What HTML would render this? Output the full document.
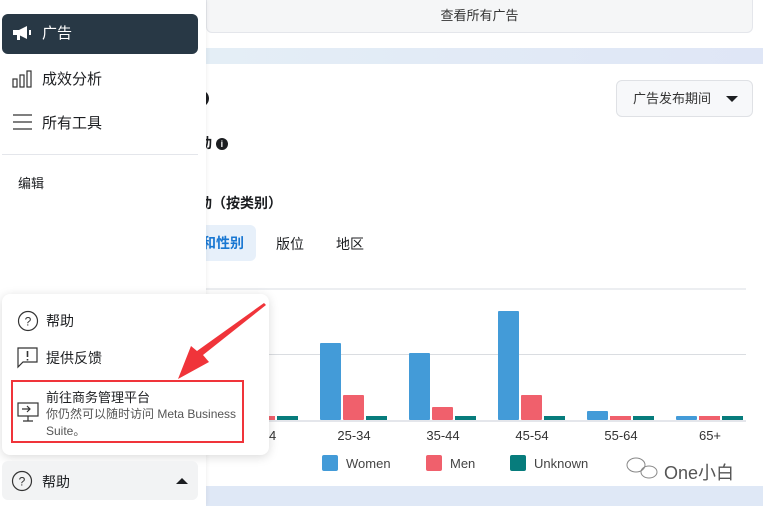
<!DOCTYPE html>
<html><head><meta charset="utf-8"><style>
*{margin:0;padding:0;box-sizing:border-box}
body{width:763px;height:506px;overflow:hidden;position:relative;background:#fff;font-family:"Liberation Sans","Noto Sans CJK SC",sans-serif;color:#1c1e21}
.a{position:absolute}
.t{font-size:14px;color:#1c1e21}
</style></head><body>
<div class="a" style="left:206px;top:0;width:557px;height:506px;background:#fff"></div>
<div class="a" style="left:206px;top:48px;width:557px;height:16px;background:linear-gradient(90deg,#e4eef6,#dfe6f6)"></div>
<div class="a" style="left:206px;top:486px;width:557px;height:20px;background:#dfe8f6"></div>
<div class="a" style="left:206px;top:-2px;width:547px;height:35px;background:#f5f6f7;border:1px solid #e4e6eb;border-radius:0 0 6px 6px;text-align:center;line-height:33px;font-size:13px;color:#333">查看所有广告</div>
<div class="a" style="left:192px;top:90px;width:17px;height:17px;border-radius:50%;background:#1c1e21"></div>
<div class="a" style="left:616px;top:80px;width:137px;height:37px;border:1px solid #dfe1e5;border-radius:6px;background:#f7f8fa;font-size:13px;line-height:35px;padding-left:16px;color:#333">广告发布期间<span style="position:absolute;right:14px;top:15px;border-left:6px solid transparent;border-right:6px solid transparent;border-top:6px solid #1c1e21"></span></div>
<div class="a t" style="left:198px;top:133px;font-weight:bold">动 <span style="display:inline-block;width:12px;height:12px;border-radius:50%;background:#1c1e21;color:#fff;font-size:9px;line-height:12px;text-align:center;vertical-align:1px">i</span></div>
<div class="a t" style="left:198px;top:193px;font-weight:bold">动（按类别）</div>
<div class="a" style="left:200px;top:225px;width:56px;height:36px;background:#e7f0fa;border-radius:0 6px 6px 0;color:#1877d2;font-weight:bold;font-size:14px;line-height:36px;padding-left:2px">和性别</div>
<div class="a t" style="left:276px;top:234px">版位</div>
<div class="a t" style="left:336px;top:234px">地区</div>
<div class="a" style="left:206px;top:288px;width:540px;height:2px;background:#eceef1"></div>
<div class="a" style="left:206px;top:354px;width:540px;height:1px;background:#dadde1"></div>
<div class="a" style="left:206px;top:420px;width:540px;height:2px;background:#e4e6eb"></div>
<svg class="a" style="left:0;top:0" width="763" height="506">
<g fill="#439bd8">
<rect x="320" y="343" width="21" height="77" rx="1"/><rect x="409" y="353" width="21" height="67" rx="1"/><rect x="498" y="311" width="21" height="109" rx="1"/><rect x="587" y="411" width="21" height="9" rx="1"/><rect x="676" y="416" width="21" height="4" rx="1"/>
</g>
<g fill="#f0606c">
<rect x="254" y="416" width="21" height="4"/><rect x="343" y="395" width="21" height="25" rx="1"/><rect x="432" y="407" width="21" height="13" rx="1"/><rect x="521" y="395" width="21" height="25" rx="1"/><rect x="610" y="416" width="21" height="4"/><rect x="699" y="416" width="21" height="4"/>
</g>
<g fill="#077c7c">
<rect x="277" y="416" width="21" height="4"/><rect x="366" y="416" width="21" height="4"/><rect x="455" y="416" width="21" height="4"/><rect x="544" y="416" width="21" height="4"/><rect x="633" y="416" width="21" height="4"/><rect x="722" y="416" width="21" height="4"/>
</g>
<g font-family="Liberation Sans" font-size="13" fill="#333" text-anchor="middle">
<text x="269" y="440">24</text><text x="354" y="440">25-34</text><text x="443" y="440">35-44</text><text x="532" y="440">45-54</text><text x="621" y="440">55-64</text><text x="710" y="440">65+</text>
</g>
<rect x="322" y="455" width="16" height="16" rx="2" fill="#439bd8"/><text x="346" y="468" font-size="13" fill="#444" font-family="Liberation Sans">Women</text>
<rect x="426" y="455" width="16" height="16" rx="2" fill="#f0606c"/><text x="450" y="468" font-size="13" fill="#444" font-family="Liberation Sans">Men</text>
<rect x="510" y="455" width="16" height="16" rx="2" fill="#077c7c"/><text x="534" y="468" font-size="13" fill="#444" font-family="Liberation Sans">Unknown</text>
<g stroke="#888" fill="none" stroke-width="1"><ellipse cx="636" cy="465" rx="9" ry="7"/><ellipse cx="649" cy="472" rx="8" ry="6"/></g>
<text x="664" y="479" font-size="18" fill="#555" font-family="Liberation Sans,Noto Sans CJK SC">One小白</text>
</svg>
<div class="a" style="left:0;top:0;width:206px;height:506px;background:#fff;box-shadow:1px 0 4px rgba(0,0,0,.06)"></div>
<div class="a" style="left:2px;top:14px;width:196px;height:40px;background:#283845;border-radius:6px;color:#fff;font-size:15px;line-height:40px;padding-left:40px">广告</div>
<svg class="a" style="left:12px;top:26px" width="22" height="16"><path d="M1 4h6l8-4v13l-8-4H1z" fill="#fff"/><rect x="5" y="9" width="3" height="5" fill="#fff"/><rect x="17" y="4" width="2" height="5" fill="#fff"/></svg>
<svg class="a" style="left:12px;top:69px" width="22" height="20" fill="none" stroke="#333" stroke-width="1.2"><rect x="1" y="10" width="4" height="8"/><rect x="8" y="6" width="4" height="12"/><rect x="15" y="2" width="4" height="16"/></svg>
<div class="a t" style="left:42px;top:68px;font-size:15px">成效分析</div>
<svg class="a" style="left:12px;top:113px" width="22" height="18" stroke="#333" stroke-width="1.3"><path d="M1 2h19M1 9h19M1 16h19"/></svg>
<div class="a t" style="left:42px;top:112px;font-size:15px">所有工具</div>
<div class="a" style="left:2px;top:154px;width:196px;height:1px;background:#e4e6eb"></div>
<div class="a t" style="left:18px;top:173px;font-size:13px">编辑</div>
<div class="a" style="left:2px;top:294px;width:267px;height:161px;background:#fff;border-radius:8px;box-shadow:0 2px 10px rgba(0,0,0,.15)"></div>
<svg class="a" style="left:17px;top:310px" width="22" height="22" fill="none" stroke="#333" stroke-width="1.2"><circle cx="11" cy="11" r="9.5"/><text x="11" y="15.5" font-size="12" fill="#333" stroke="none" text-anchor="middle" font-family="Liberation Sans">?</text></svg>
<div class="a t" style="left:46px;top:311px">帮助</div>
<svg class="a" style="left:17px;top:347px" width="22" height="22" fill="none" stroke="#333" stroke-width="1.2"><path d="M1 1h19v14H6l-5 5z"/><path d="M10.5 4v6M10.5 12v1.5" stroke-width="1.6"/></svg>
<div class="a t" style="left:46px;top:348px">提供反馈</div>
<div class="a" style="left:11px;top:380px;width:233px;height:63px;border:2px solid #f0343a"></div>
<svg class="a" style="left:17px;top:402px" width="22" height="20" fill="none" stroke="#333" stroke-width="1.2"><rect x="1" y="1" width="20" height="13"/><path d="M6 19h10M11 14v5M5 7h8M10 4l3 3-3 3"/></svg>
<div class="a t" style="left:46px;top:387px;font-size:13px">前往商务管理平台</div>
<div class="a" style="left:46px;top:406px;font-size:12px;color:#555;width:196px;line-height:17px">你仍然可以随时访问 Meta Business Suite。</div>
<svg class="a" style="left:0;top:0" width="763" height="506"><path d="M266 305 L203 355 L209 362 L178 379 L191 346 L197 351 L264 303 Z" fill="#f0343a"/></svg>
<div class="a" style="left:2px;top:461px;width:196px;height:39px;background:#f2f3f4;border-radius:6px"></div>
<svg class="a" style="left:11px;top:470px" width="22" height="22" fill="none" stroke="#333" stroke-width="1.2"><circle cx="11" cy="11" r="9.5"/><text x="11" y="15.5" font-size="12" fill="#333" stroke="none" text-anchor="middle" font-family="Liberation Sans">?</text></svg>
<div class="a t" style="left:42px;top:472px">帮助</div>
<div class="a" style="left:176px;top:478px;border-left:6px solid transparent;border-right:6px solid transparent;border-bottom:6px solid #1c1e21"></div>
</body></html>
